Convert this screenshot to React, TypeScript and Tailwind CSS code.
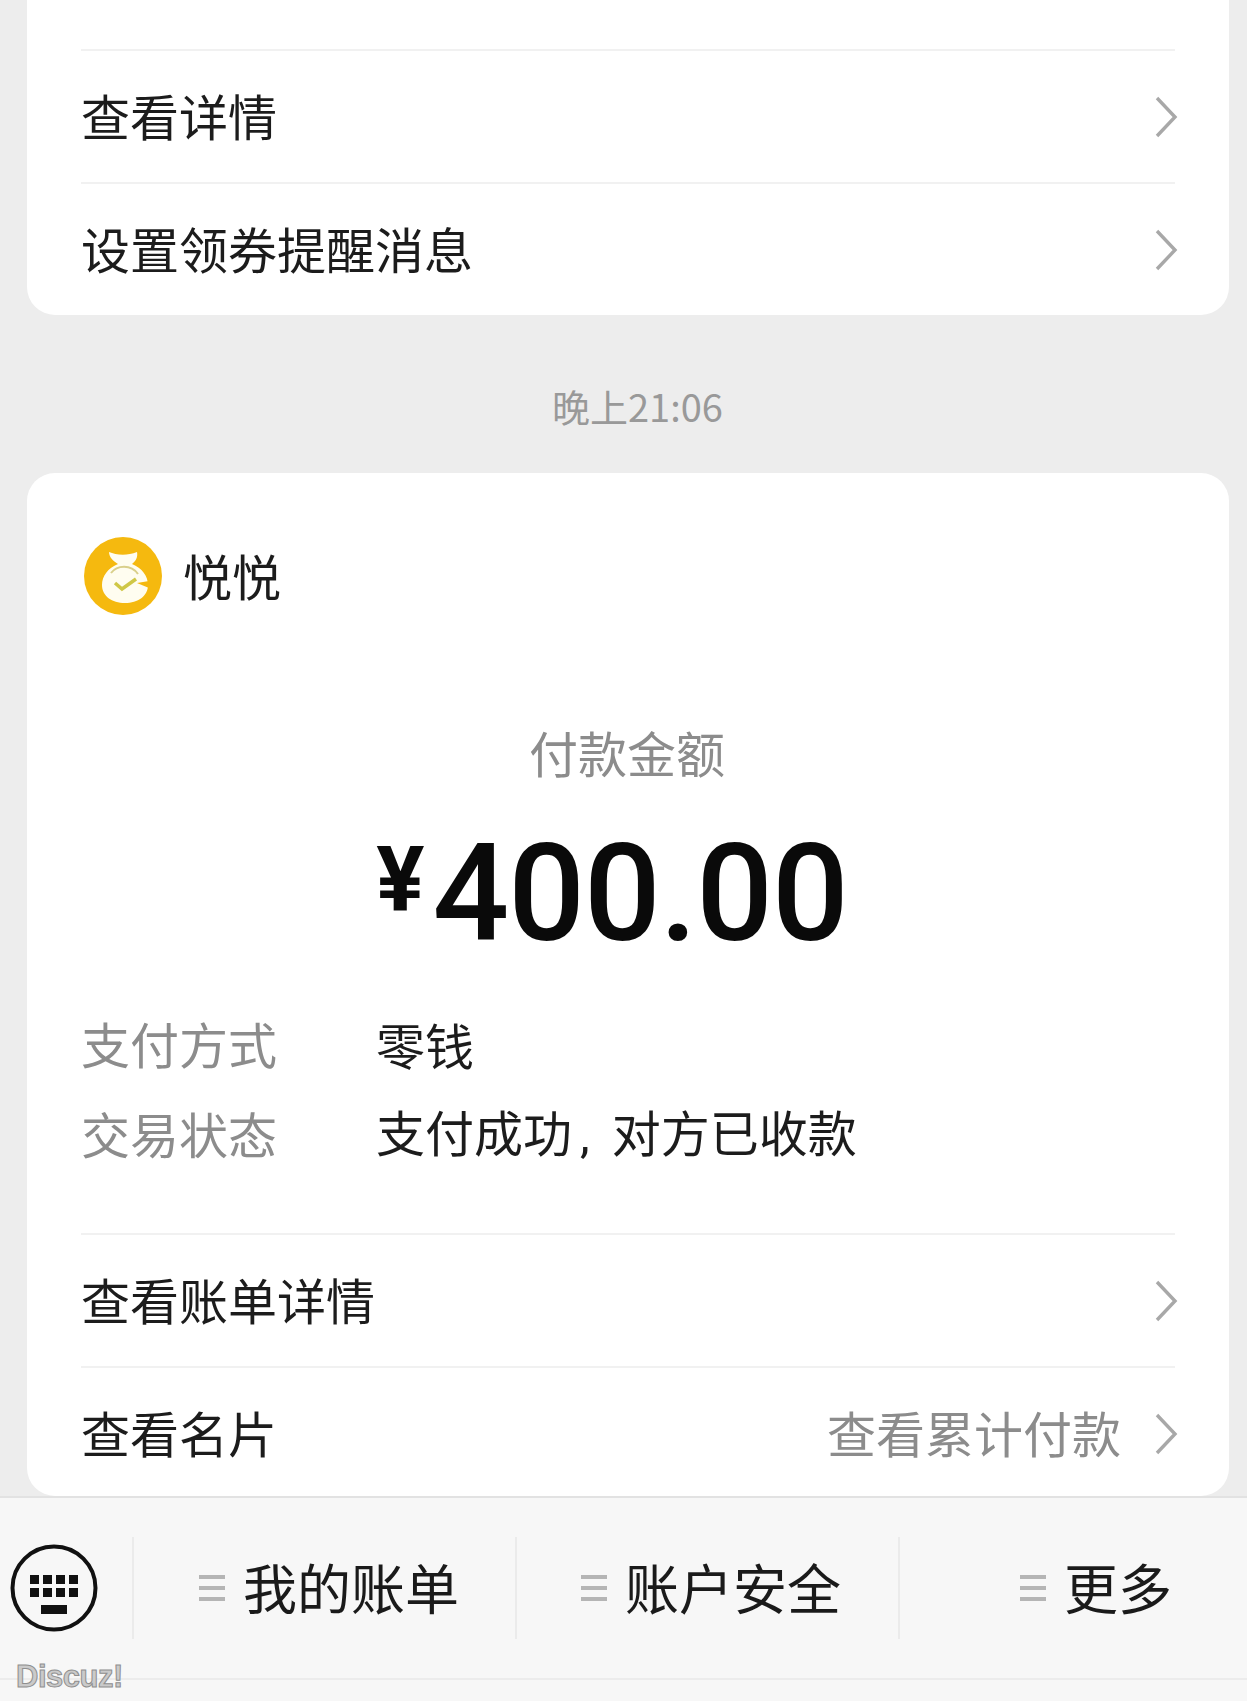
import React from "react";

const cjk = "font-['Noto_Sans_CJK_SC','Noto_Sans',sans-serif]";

function Chevron() {
  return (
    <svg width="24" height="42" viewBox="0 0 24 42" fill="none" className="mr-[-3px] shrink-0">
      <path d="M3 2 L21 21 L3 40" stroke="#a8a8a8" strokeWidth="3.4" />
    </svg>
  );
}

function LinkRow({ label, hint, h }: { label: string; hint?: string; h: string }) {
  return (
    <div className={`flex items-center justify-between border-t-2 border-[#f1f1f1] ${h}`}>
      <span className="pb-[4px] text-[49px] leading-none text-[#1c1c1c]">{label}</span>
      <div className="flex items-center gap-[33px]">
        {hint && <span className="pb-[4px] text-[49px] leading-none text-[#8c8c8c]">{hint}</span>}
        <Chevron />
      </div>
    </div>
  );
}

function Avatar() {
  return (
    <svg width="80" height="80" viewBox="0 0 80 80" className="shrink-0">
      <circle cx="40" cy="40" r="39" fill="#f5b90f" />
      <path
        d="M26 16 C33 19 44 20 54 16 C55 21 53 25 49 28 C59 32 65 40 65 49 C65 60 55 67 42 67 C29 67 19 60 19 49 C19 40 25 32 35 28 C30 25 26 21 26 16 Z"
        fill="#fffdf0"
      />
      <path d="M28 37 C34 29 48 28 55 38" stroke="#d9cf8a" strokeWidth="2" fill="none" />
      <path d="M66 45 L54 47 L66 52 Z" fill="#f5b90f" />
      <path d="M32 47 L39 53 L53 43" stroke="#cfc746" strokeWidth="3.5" fill="none" />
    </svg>
  );
}

function Keyboard() {
  const keys = [0, 1, 2, 3];
  return (
    <svg width="88" height="88" viewBox="0 0 88 88" className="shrink-0">
      <circle cx="44" cy="44" r="41.5" fill="none" stroke="#111" strokeWidth="4" />
      {keys.map((i) => (
        <rect key={`a${i}`} x={20 + i * 13} y="31" width="9" height="9" fill="#111" />
      ))}
      {keys.map((i) => (
        <rect key={`b${i}`} x={20 + i * 13} y="44" width="9" height="9" fill="#111" />
      ))}
      <rect x="31" y="61" width="26" height="9" fill="#111" />
    </svg>
  );
}

function Burger() {
  return (
    <div className="flex h-[26px] w-[26px] shrink-0 flex-col justify-between">
      <div className="h-[4px] bg-[#b5b5b5]" />
      <div className="h-[4px] bg-[#b5b5b5]" />
      <div className="h-[4px] bg-[#b5b5b5]" />
    </div>
  );
}

function MenuItem({ label, className }: { label: string; className: string }) {
  return (
    <div className={`flex h-[102px] items-center border-l-2 border-[#ebebeb] ${className}`}>
      <Burger />
      <span className="ml-[18px] pb-[2px] text-[54px] leading-none text-[#1a1a1a]">{label}</span>
    </div>
  );
}

function Detail({ k, children }: { k: string; children: React.ReactNode }) {
  return (
    <div className="flex h-[90px] items-center">
      <span className="w-[295px] pb-[3px] text-[49px] leading-none text-[#8c8c8c]">{k}</span>
      <span className="pb-[2px] text-[49px] leading-none text-[#1c1c1c]">{children}</span>
    </div>
  );
}

export default function App() {
  return (
    <div className={`flex h-[1701px] w-[1247px] flex-col overflow-hidden bg-[#ededed] ${cjk}`}>
      <div className="ml-[27px] mr-[18px] h-[315px] shrink-0 rounded-b-[28px] bg-white px-[54px] pt-[49px]">
        <LinkRow label="查看详情" h="h-[133px]" />
        <LinkRow label="设置领券提醒消息" h="h-[133px]" />
      </div>

      <div className="flex h-[158px] shrink-0 items-center justify-center pl-[28px] pt-[24px] text-[38px] leading-none text-[#999999]">
        晚上21:06
      </div>

      <div className="ml-[27px] mr-[18px] flex h-[1023px] shrink-0 flex-col rounded-[28px] bg-white px-[54px]">
        <div className="flex h-[106px] items-center pl-[2px] pt-[100px]">
          <Avatar />
          <span className="ml-[20px] pb-[4px] text-[49px] leading-none text-[#1c1c1c]">悦悦</span>
        </div>

        <div className="mt-[148px] pr-[2px] text-center text-[49px] leading-none text-[#8c8c8c]">付款金额</div>

        <div className="mt-[58px] flex h-[120px] items-center justify-center pr-[32px] font-['Roboto',sans-serif] leading-none text-[#0a0a0a]">
          <span className="mb-[26px] text-[90px] font-bold">¥</span>
          <span className="ml-[8px] text-[135px] font-medium tracking-[-1px]">400.00</span>
        </div>

        <div className="mt-[45px]">
          <Detail k="支付方式">零钱</Detail>
          <Detail k="交易状态">
            支付成功<span className="ml-[8px] mr-[6px] font-['Roboto',sans-serif]">,</span>
            <span className="ml-[16px]">对方已收款</span>
          </Detail>
        </div>

        <div className="mt-[54px]">
          <LinkRow label="查看账单详情" h="h-[133px]" />
          <LinkRow label="查看名片" hint="查看累计付款" h="h-[133px]" />
        </div>
      </div>

      <div className="flex flex-1 flex-col border-t-2 border-[#e2e2e2] bg-[#f7f7f7]">
        <div className="flex h-[182px] items-center border-b-2 border-[#ececec]">
          <div className="flex w-[132px] shrink-0 items-center pl-[10px]">
            <Keyboard />
          </div>
          <MenuItem label="我的账单" className="w-[383px] pl-[65px]" />
          <MenuItem label="账户安全" className="w-[383px] pl-[64px]" />
          <MenuItem label="更多" className="flex-1 pl-[120px]" />
        </div>
      </div>

      <div className="absolute left-[16px] top-[1661px] font-['Liberation_Sans',sans-serif] text-[31px] font-bold leading-none tracking-[-0.5px] text-[#cacaca] [-webkit-text-stroke:1px_#8f8f8f]">
        Discuz!
      </div>
    </div>
  );
}
